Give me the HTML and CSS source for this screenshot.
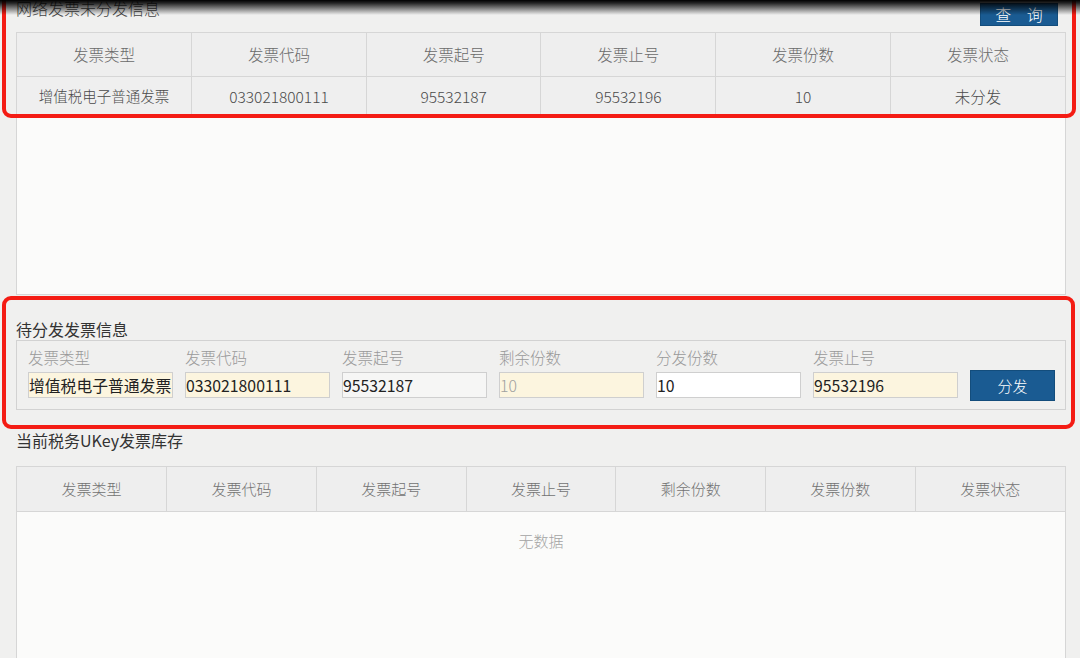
FILE: index.html
```html
<!DOCTYPE html>
<html>
  <head>
    <meta charset="utf-8">
    <title>发票分发</title>
    <link rel="stylesheet" href="styles.css">
  </head>
  <body>
  <div class="top-shade"></div>
  <div class="page">

    <!-- 网络发票未分发信息 -->
    <div class="net-head">
      <div class="net-title">网络发票未分发信息</div>
      <button class="btn btn-query">查 询</button>
    </div>
    <div class="panel panel-net">
      <table class="grid">
        <tr class="grid-head">
          <th>发票类型</th>
          <th>发票代码</th>
          <th>发票起号</th>
          <th>发票止号</th>
          <th>发票份数</th>
          <th>发票状态</th>
        </tr>
        <tr class="grid-row">
          <td>增值税电子普通发票</td>
          <td>033021800111</td>
          <td>95532187</td>
          <td>95532196</td>
          <td>10</td>
          <td>未分发</td>
        </tr>
      </table>
    </div>

    <!-- 待分发发票信息 -->
    <div class="sec-title sec-pending">待分发发票信息</div>
    <div class="form-box">
      <div class="field">
        <label class="field-label">发票类型</label>
        <input class="field-input cream" type="text" value="增值税电子普通发票" readonly>
      </div>
      <div class="field">
        <label class="field-label">发票代码</label>
        <input class="field-input cream" type="text" value="033021800111" readonly>
      </div>
      <div class="field">
        <label class="field-label">发票起号</label>
        <input class="field-input plain" type="text" value="95532187" readonly>
      </div>
      <div class="field">
        <label class="field-label">剩余份数</label>
        <input class="field-input cream muted" type="text" value="10" readonly>
      </div>
      <div class="field">
        <label class="field-label">分发份数</label>
        <input class="field-input white" type="text" value="10">
      </div>
      <div class="field">
        <label class="field-label">发票止号</label>
        <input class="field-input cream" type="text" value="95532196" readonly>
      </div>
      <button class="btn btn-send">分发</button>
    </div>

    <!-- 当前税务UKey发票库存 -->
    <div class="sec-title sec-stock">当前税务UKey发票库存</div>
    <div class="panel panel-stock">
      <table class="grid">
        <tr class="grid-head tall">
          <th>发票类型</th>
          <th>发票代码</th>
          <th>发票起号</th>
          <th>发票止号</th>
          <th>剩余份数</th>
          <th>发票份数</th>
          <th>发票状态</th>
        </tr>
        <tr>
          <td class="empty" colspan="7">无数据</td>
        </tr>
      </table>
    </div>
  </div>

  <div class="mark mark-net"></div>
  <div class="mark mark-pending"></div>
  </body>
</html>
```

FILE: styles.css
```css
html, body {
    margin: 0;
    padding: 0;
}
body {
    background-color: #f0f0ef;
    font-family: "Noto Sans CJK SC", "Open Sans", sans-serif;
    font-weight: 300;
    color: #333;
    overflow: hidden;
    height: 658px;
}
.page {
    padding: 0 14px 0 16px;
}

/* top part */
.net-head {
    display: flex;
    justify-content: space-between;
    align-items: flex-start;
    height: 32px;
}
.net-title {
    font-size: 16px;
    line-height: 16px;
    color: #444;
}
.btn {
    border: 1px solid #134d7c;
    background-color: #1a5b92;
    color: #fff;
    font-family: "Noto Sans CJK SC", sans-serif;
    font-weight: 300;
    cursor: pointer;
    padding: 0;
}
.btn-query {
    margin-top: 3px;
    margin-right: 8px;
    width: 78px;
    height: 23px;
    font-size: 16px;
    line-height: 21px;
    letter-spacing: 6px;
    text-indent: 6px;
}

.panel {
    border: 1px solid #d6d6d6;
    background-color: #fbfbfa;
    box-sizing: border-box;
}
.panel-net {
    height: 263px;
}
.panel-stock {
    height: 220px;
}

.grid {
    width: 100%;
    border-collapse: collapse;
    table-layout: fixed;
}
.grid th,
.grid td {
    text-align: center;
    padding: 0;
    white-space: nowrap;
}
.grid-head th {
    height: 41px;
    background-color: #eeeeee;
    border-right: 1px solid #d6d6d6;
    border-bottom: 1px solid #d6d6d6;
    font-weight: 300;
    font-size: 15.5px;
    color: #6a6a6a;
    padding-bottom: 2px;
}
.grid-head.tall th {
    height: 42px;
    font-size: 15px;
    color: #727272;
}
.grid-head th:last-child {
    border-right: none;
}
.grid-row td {
    height: 37px;
    background-color: #efefef;
    border-right: 1px solid #d6d6d6;
    border-bottom: 1px solid #d6d6d6;
    font-size: 15.5px;
    color: #4a4a4a;
}
.grid-row td:first-child {
    font-size: 14.5px;
}
.grid-row td:last-child {
    border-right: none;
}
.grid .empty {
    height: 56px;
    font-size: 15px;
    color: #a3a3a3;
    background-color: #fbfbfa;
    padding-bottom: 4px;
}

/* forms */
.sec-title {
    font-size: 16px;
    line-height: 20px;
    font-weight: 400;
    color: #333;
}
.sec-pending {
    margin-top: 24px;
}
.sec-stock {
    margin-top: 20px;
    margin-bottom: 16px;
}
.form-box {
    margin-top: 1px;
    height: 70px;
    box-sizing: border-box;
    border: 1px solid #d2d2d2;
    padding: 6px 0 0 11px;
    display: flex;
    align-items: flex-end;
    gap: 12px;
}
.field {
    width: 145px;
    display: flex;
    flex-direction: column;
    gap: 5px;
    padding-bottom: 11px;
}
.field-label {
    font-size: 15.5px;
    line-height: 20px;
    color: #999;
    white-space: nowrap;
}
.field-input {
    width: 145px;
    height: 26px;
    box-sizing: border-box;
    border: 1px solid #cfcfcf;
    padding: 0;
    font-family: "Noto Sans CJK SC", sans-serif;
    font-weight: 400;
    font-size: 15.8px;
    color: #222;
    outline: none;
}
.field-input.cream {
    background-color: #fcf5df;
}
.field-input.plain {
    background-color: #f6f6f5;
}
.field-input.white {
    background-color: #ffffff;
}
.field-input.muted {
    color: #a0a0a0;
    font-weight: 300;
}
.btn-send {
    width: 85px;
    height: 31px;
    margin-bottom: 8px;
    font-size: 15px;
}

/* overlays */
.top-shade {
    position: absolute;
    left: 0;
    top: 0;
    width: 100%;
    height: 15px;
    background: linear-gradient(#000 0, rgba(0, 0, 0, 0.85) 3px, rgba(0, 0, 0, 0) 15px);
    z-index: 3;
}
.mark {
    position: absolute;
    border: 4px solid #f41c14;
    border-radius: 9px;
    box-sizing: border-box;
    z-index: 2;
}
.mark-net {
    left: 2px;
    top: -12px;
    width: 1074px;
    height: 130px;
}
.mark-pending {
    left: 2px;
    top: 296px;
    width: 1073px;
    height: 133px;
}
```
